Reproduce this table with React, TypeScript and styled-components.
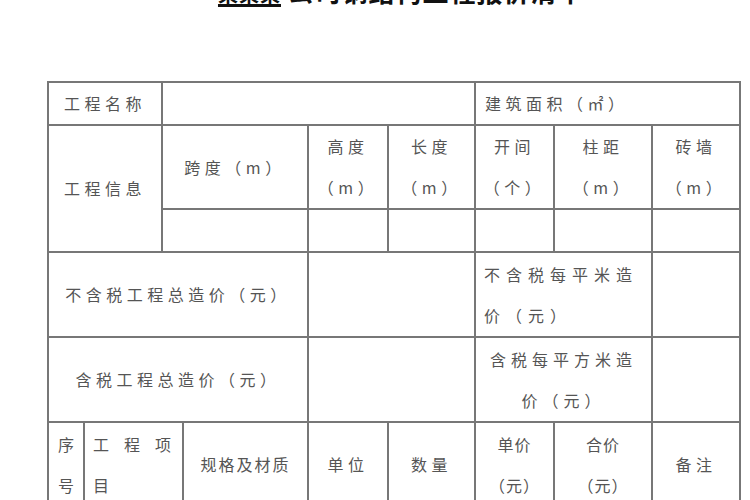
import React from 'react';
import styled, { createGlobalStyle } from 'styled-components';

const GlobalStyle = createGlobalStyle`
  html, body {
    margin: 0;
    padding: 0;
    background: #ffffff;
  }
  body {
    font-family: "Noto Sans CJK SC", "Noto Sans", sans-serif;
    color: #555;
  }
`;

const Page = styled.div`
  width: 750px;
  height: 500px;
  overflow: hidden;
  padding-left: 47px;
  box-sizing: border-box;
`;

const Title = styled.div`
  width: 692px;
  height: 30px;
  margin-top: -24px;
  padding-left: 14px;
  box-sizing: border-box;
  text-align: center;
  font-size: 26px;
  line-height: 30px;
  font-weight: 700;
  color: #111;
  letter-spacing: 1px;
  white-space: nowrap;
`;

const Blank = styled.span`
  display: inline-block;
  width: 68px;
  margin-right: 4px;
  font-size: 20px;
  text-decoration: underline;
  text-decoration-thickness: 3px;
  text-underline-offset: 2px;
`;

const Sheet = styled.table`
  margin-top: 75px;
  width: 692px;
  table-layout: fixed;
  border-collapse: collapse;
  font-size: 16px;
  color: #555;
`;

const Row = styled.tr<{ $h: number }>`
  height: ${(p) => p.$h}px;
`;

const Cell = styled.td<{ $align?: 'left' | 'center'; $spacing?: number; $pad?: number }>`
  border: 2px solid #777;
  padding: 0 ${(p) => p.$pad ?? 6}px;
  text-align: ${(p) => p.$align ?? 'center'};
  vertical-align: middle;
  line-height: 41px;
  letter-spacing: ${(p) => p.$spacing ?? 4.5}px;
  white-space: nowrap;
`;

const widths = [36, 78, 21, 125, 80, 87, 79, 98, 88];

export default function App() {
  return (
    <>
      <GlobalStyle />
      <Page>
        <Title>
          <Blank>某某某</Blank>公司钢结构工程报价清单
        </Title>
        <Sheet>
          <colgroup>
            {widths.map((w, i) => (
              <col key={i} style={{ width: w }} />
            ))}
          </colgroup>
          <tbody>
            <Row $h={41}>
              <Cell colSpan={2}>工程名称</Cell>
              <Cell colSpan={4} />
              <Cell colSpan={3} $align="left" $pad={9}>
                建筑面积（㎡）
              </Cell>
            </Row>
            <Row $h={84}>
              <Cell colSpan={2} rowSpan={2}>
                工程信息
              </Cell>
              <Cell colSpan={2}>跨度（m）</Cell>
              <Cell>
                高度
                <br />
                （m）
              </Cell>
              <Cell>
                长度
                <br />
                （m）
              </Cell>
              <Cell>
                开间
                <br />
                （个）
              </Cell>
              <Cell>
                柱距
                <br />
                （m）
              </Cell>
              <Cell>
                砖墙
                <br />
                （m）
              </Cell>
            </Row>
            <Row $h={43}>
              <Cell colSpan={2} />
              <Cell />
              <Cell />
              <Cell />
              <Cell />
              <Cell />
            </Row>
            <Row $h={85}>
              <Cell colSpan={4}>不含税工程总造价（元）</Cell>
              <Cell colSpan={2} />
              <Cell colSpan={2} $align="left" $pad={8} $spacing={6}>
                不含税每平米造
                <br />
                价（元）
              </Cell>
              <Cell />
            </Row>
            <Row $h={85}>
              <Cell colSpan={4}>含税工程总造价（元）</Cell>
              <Cell colSpan={2} />
              <Cell colSpan={2} $spacing={5}>
                含税每平方米造
                <br />
                价（元）
              </Cell>
              <Cell />
            </Row>
            <Row $h={85}>
              <Cell $pad={2} $spacing={0}>
                序
                <br />
                号
              </Cell>
              <Cell colSpan={2} $align="left" $pad={8} $spacing={15}>
                工程项
                <br />
                目
              </Cell>
              <Cell $spacing={2}>规格及材质</Cell>
              <Cell>单位</Cell>
              <Cell>数量</Cell>
              <Cell $spacing={1}>
                单价
                <br />
                （元）
              </Cell>
              <Cell $spacing={1}>
                合价
                <br />
                （元）
              </Cell>
              <Cell>备注</Cell>
            </Row>
          </tbody>
        </Sheet>
      </Page>
    </>
  );
}
